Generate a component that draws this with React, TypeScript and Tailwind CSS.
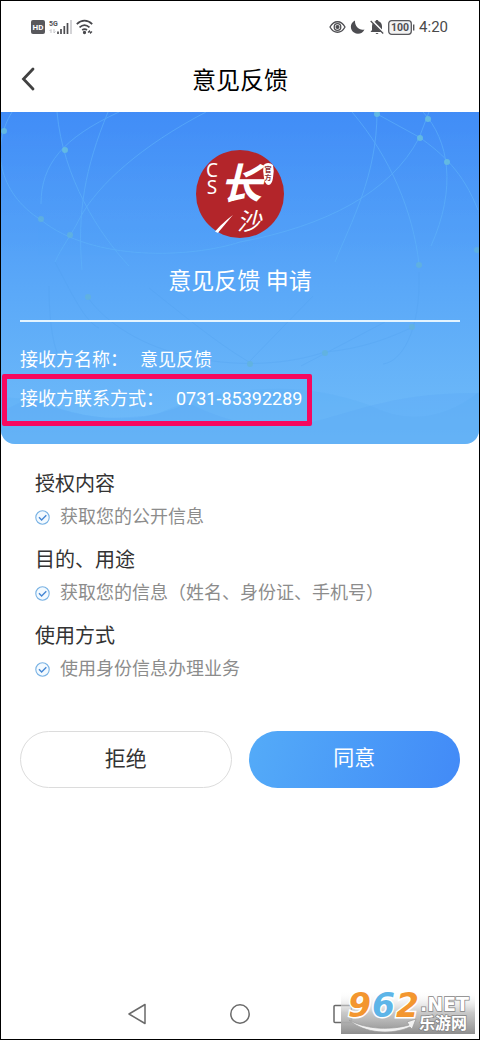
import React from 'react';

const sections = [
  { title: '授权内容', detail: '获取您的公开信息' },
  { title: '目的、用途', detail: '获取您的信息（姓名、身份证、手机号）' },
  { title: '使用方式', detail: '使用身份信息办理业务' },
];

const StatusBar = () => (
  <div className="flex h-[52px] items-center justify-between pr-[31px] pl-[30px] text-[#4a4a4a]">
    <div className="flex items-center gap-1">
      <svg width="14" height="14" viewBox="0 0 14 14">
        <rect width="14" height="14" rx="2" fill="#58585c" />
        <text x="7" y="10" textAnchor="middle" fontSize="8" fontWeight="700" fontFamily="Roboto, sans-serif" fill="#fff">HD</text>
      </svg>
      <svg width="23" height="16" viewBox="0 0 23 16">
        <text x="0" y="7" fontSize="7" fontWeight="700" fontFamily="Roboto, sans-serif" fill="#505054">5G</text>
        <path d="M2 14V10.500M.5 12l1.500-1.500M5 10v4l1.500-1.500" stroke="#c4c4c8" fill="none" />
        <path d="M9 15v-2.500M12 15v-5M15.300 15V7M18.500 15V4" stroke="#4c4c50" strokeWidth="1.700" />
        <path d="M22 15V1" stroke="#c8c8cc" strokeWidth="1.600" />
      </svg>
      <svg width="18" height="16" viewBox="0 0 18 16" fill="none" stroke="#47474b" strokeWidth="1.700">
        <path d="M.8 5.200C5.500.5 11.500.5 16.200 5.200M3.500 8.300c3.300-3 6.700-3 10 0M6.200 11c1.600-1.300 3.200-1.300 4.800 0" />
        <circle cx="8.500" cy="13.500" r=".8" fill="#47474b" />
        <path d="M12 13.500l1.500-1.500 1 2 1.500-1.500" strokeWidth="1.200" />
      </svg>
    </div>
    <div className="flex items-center gap-1">
      <svg width="17" height="14" viewBox="0 0 17 14" fill="none" stroke="#4d4d51" strokeWidth="1.300">
        <path d="M1 7c3.800-7 11.200-7 15 0-3.800 7-11.200 7-15 0z" />
        <circle cx="8.500" cy="7" r="3.300" />
        <circle cx="8.500" cy="7" r="1.400" fill="#4d4d51" />
      </svg>
      <svg width="16" height="16" viewBox="0 0 16 16">
        <path d="M5 1.500C-.5 4-.2 11 4 13.600c4 2.600 8.800.8 10.500-3.100C9.500 12 4.500 7.500 5 1.500z" fill="#4d4d51" />
      </svg>
      <svg width="14" height="16" viewBox="0 0 14 16">
        <path d="M7 1c1 0 1.300.7 1.500 1.300C11 3 12 5 12 7.500V11l1.500 2H.5L2 11V7.500C2 5 3 3 5.500 2.300 5.700 1.700 6 1 7 1zM5.500 14h3c-.5 1.400-2.500 1.400-3 0z" fill="#4d4d51" />
        <path d="M1.800 1.500l12 12.500" stroke="#fff" strokeWidth="2.200" />
        <path d="M.7 2l12.500 12.500" stroke="#4d4d51" strokeWidth="1.300" />
      </svg>
      <svg width="27" height="15" viewBox="0 0 27 15">
        <rect x=".7" y=".7" width="22.600" height="13.600" rx="3" fill="#f3f3f3" stroke="#57575b" strokeWidth="1.300" />
        <text x="12" y="11.200" textAnchor="middle" fontSize="10.500" fontWeight="700" fontFamily="Roboto, sans-serif" fill="#505054">100</text>
        <path d="M25.700 4.500v6" stroke="#57575b" strokeWidth="1.400" />
      </svg>
      <span className="text-[15px] leading-5">4:20</span>
    </div>
  </div>
);

const HeroBackdrop = () => (
  <svg className="absolute inset-0 h-full w-full" viewBox="0 0 478 332" preserveAspectRatio="none" fill="none">
    <g stroke="#5fb4fb" strokeWidth="1" opacity=".6">
      <path d="M56 0C62 66 98 122 128 154" />
      <path d="M118 0C62 26 40 52 40 92" />
      <path d="M107 0C84 56 76 100 81 158" />
      <path d="M205 0C140 34 98 72 80 104C70 124 60 136 54 150" />
      <path d="M11 0C-10 34 -4 80 40 108C92 150 190 146 239 130C325 114 390 80 418 26L428 0" />
      <path d="M351 0C390 46 412 100 418 152" />
      <path d="M376 0C376 64 350 110 334 150" />
      <path d="M376 2L418 25C442 42 462 60 477 98" />
      <path d="M422 0C448 28 456 76 430 134" />
    </g>
    <g stroke="#4d9eee" strokeWidth="1" opacity=".25">
      <path d="M54 150C70 180 84 210 98 216M148 176C176 198 214 230 248 250M48 174C48 220 55 245 62 250" />
      <path d="M87 186C135 250 250 265 324 240C370 236 400 220 410 216" />
      <path d="M312 184L248 250M384 210L300 254M418 160C420 220 400 250 382 252" />
    </g>
    <g fill="#67bfe0" opacity=".85">
      <circle cx="3" cy="19" r="3" />
      <circle cx="64" cy="38" r="3" />
      <circle cx="376" cy="2" r="3" />
      <circle cx="427" cy="7" r="3" />
      <circle cx="419" cy="26" r="3" />
      <circle cx="446" cy="50" r="3" />
    </g>
    <g fill="#62b4da" opacity=".75">
      <circle cx="40" cy="107" r="3" />
      <circle cx="69" cy="123" r="3" />
      <circle cx="87" cy="185" r="3" />
      <circle cx="418" cy="153" r="3" />
      <circle cx="476" cy="138" r="3" />
      <circle cx="411" cy="215" r="3" />
      <circle cx="324" cy="241" r="3" />
      <circle cx="249" cy="252" r="3" />
    </g>
    <path d="M0 286Q24 284 50 294Q110 314 156 302Q195 284 250 278Q310 272 368 293Q424 322 478 280V332H0z" fill="#5aabf5" opacity=".28" />
    <path d="M0 300L30 285Q80 310 130 305Q160 304 187 291Q245 320 295 314C350 302 390 280 478 281V332H0z" fill="#59a9f6" opacity=".32" />
  </svg>
);

const Emblem = () => (
  <svg className="relative mx-auto" width="88" height="88" viewBox="0 0 88 88" role="img" aria-label="长沙">
    <circle cx="44" cy="44" r="44" fill="#b3252a" />
    <path d="M37 65C31 72 25 79 22 83l-3-1.500C23 77 30 70 37 65z" fill="#fff" />
    <path d="M67.500 15q4.500-4 9.500 0q1.500 6 0 13q-1 6.500-4.500 7q-3.500-.5-4.500-7q-1.500-7-.5-13z" fill="#fff" />
    <g fill="#fff" textAnchor="middle">
      <text x="16" y="27" fontSize="19" fontFamily="'Noto Sans', sans-serif">C</text>
      <text x="16" y="44" fontSize="19" fontFamily="'Noto Sans', sans-serif">S</text>
      <text x="45" y="49" fontSize="42" fontWeight="700" fontStyle="italic" fontFamily="'Noto Sans CJK SC', sans-serif">长</text>
      <text x="53" y="80" fontSize="24" fontStyle="italic" fontFamily="'Noto Sans CJK SC', sans-serif">沙</text>
    </g>
    <g fill="#8e3034" textAnchor="middle" fontSize="7" fontWeight="700" fontFamily="'Noto Sans CJK SC', sans-serif">
      <text x="72" y="22">官</text>
      <text x="72" y="30">方</text>
    </g>
  </svg>
);

const Hero = () => (
  <section className="relative overflow-hidden rounded-b-[14px] bg-linear-to-b from-[#428df7] via-[#5ba9f8] via-55% to-[#70bcf9] px-[19px] pt-[38px] pb-[31px] text-white">
    <HeroBackdrop />
    <Emblem />
    <h2 className="relative mt-[26px] text-center text-[23px] leading-9">意见反馈 申请</h2>
    <div className="relative mt-5 h-0.5 bg-[#e3f4ff]" />
    <dl className="relative mt-6 flex flex-col items-start gap-[11px] text-lg leading-7">
      <div className="flex gap-3">
        <dt>接收方名称：</dt>
        <dd>意见反馈</dd>
      </div>
      <div className="relative flex gap-3">
        <dt>接收方联系方式：</dt>
        <dd>0731-85392289</dd>
        <span className="absolute -top-[11px] -right-2.5 -bottom-[13px] -left-[18px] rounded-xs border-[5px] border-[#f7085f]" />
      </div>
    </dl>
  </section>
);

const CheckMark = () => (
  <svg width="15" height="15" viewBox="0 0 15 15" fill="none">
    <circle cx="7.500" cy="7.500" r="6.700" fill="#f3faff" stroke="#79b2e4" strokeWidth="1.100" />
    <path d="M4 7.300l2.600 2.600 4.700-4.600" stroke="#4486d4" strokeWidth="1.400" />
  </svg>
);

const Watermark = () => (
  <svg className="absolute right-1 bottom-1" width="134" height="52" viewBox="0 -8 134 52" role="img" aria-label="962.NET 乐游网">
    <defs>
      <linearGradient id="shade" x1="0" y1="0" x2="0" y2="1">
        <stop offset="0" stopColor="#fff" stopOpacity="0" />
        <stop offset=".5" stopColor="#c4c4c4" stopOpacity=".9" />
        <stop offset="1" stopColor="#8f8f8f" />
      </linearGradient>
    </defs>
    <rect width="134" height="43" fill="url(#shade)" />
    <path d="M8 29C26 39 51 39 68 34l-2-3 9-3-4 10-2-2C51 44 24 43 8 29z" fill="#f1f1f1" stroke="#999" strokeWidth=".7" />
    <g fontFamily="'DejaVu Sans', sans-serif" fontWeight="700" fontStyle="italic" fontSize="33">
      <g stroke="#fff" strokeWidth="3" paintOrder="stroke">
        <text x="7" y="26" fill="#f3962f">9</text>
        <text x="31" y="26" fill="#5db5e8">6</text>
        <text x="55" y="26" fill="#f3962f">2</text>
      </g>
    </g>
    <g fill="#fff" stroke="#858585" strokeWidth="1.500" paintOrder="stroke" fontWeight="700">
      <text x="79" y="20" fontSize="19" fontFamily="'DejaVu Sans', sans-serif">.NET</text>
      <text x="78" y="38" fontSize="16" fontFamily="'Noto Sans CJK SC', sans-serif">乐游网</text>
    </g>
  </svg>
);

const App = () => {
  return (
    <div className="relative flex min-h-screen flex-col border border-black bg-white font-['Roboto','Noto_Sans_CJK_SC',sans-serif]">
      <StatusBar />
      <header className="relative flex h-[59px] items-center justify-center pb-[3px]">
        <button type="button" aria-label="返回" className="absolute left-5 pb-1">
          <svg width="14" height="24" viewBox="0 0 14 24" fill="none">
            <path d="M12 2L2.500 12 12 22" stroke="#414141" strokeWidth="2.800" strokeLinecap="round" />
          </svg>
        </button>
        <h1 className="text-2xl text-black">意见反馈</h1>
      </header>

      <Hero />

      <main className="px-[19px] pt-[26px]">
        <div className="flex flex-col gap-[17px] px-[15px]">
          {sections.map((section) => (
            <section key={section.title}>
              <h3 className="text-xl leading-7 text-[#333]">{section.title}</h3>
              <div className="mt-[7px] flex items-center gap-2.5 text-lg leading-6 text-[#8c8c8c]">
                <CheckMark />
                <p>{section.detail}</p>
              </div>
            </section>
          ))}
        </div>
        <div className="mt-[50px] grid grid-cols-2 gap-[17px] text-[21px]">
          <button type="button" className="h-[57px] rounded-full border border-[#dcdcdc] bg-white text-[#333]">拒绝</button>
          <button type="button" className="h-[57px] rounded-full bg-linear-105 from-[#54abf8] to-[#428af7] pb-0.5 text-white">同意</button>
        </div>
      </main>

      <nav className="mt-auto flex h-[50px] items-center justify-center gap-[83px]">
        <button type="button" aria-label="后退">
          <svg width="20" height="22" viewBox="0 0 20 22" fill="none" stroke="#6a6a6a" strokeWidth="1.500" strokeLinejoin="round">
            <path d="M18 1.500v19L2 11z" />
          </svg>
        </button>
        <button type="button" aria-label="主页">
          <svg width="20" height="22" viewBox="0 0 20 22" fill="none" stroke="#6a6a6a" strokeWidth="1.500">
            <circle cx="10" cy="11" r="9.200" />
          </svg>
        </button>
        <button type="button" aria-label="最近任务">
          <svg width="20" height="22" viewBox="0 0 20 22" fill="none" stroke="#6a6a6a" strokeWidth="1.500">
            <rect x="1" y="2.500" width="17.500" height="17" rx="1" />
          </svg>
        </button>
      </nav>
      <Watermark />
    </div>
  );
};

export default App;
